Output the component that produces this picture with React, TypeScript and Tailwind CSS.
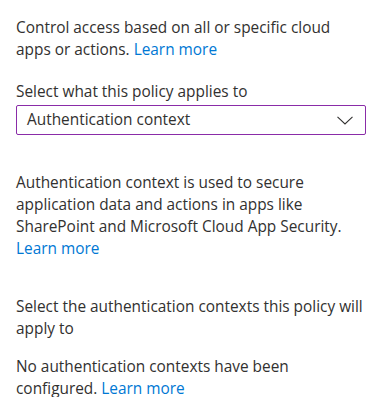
function Chevron() {
  return (
    <svg width="16" height="9" viewBox="0 0 16 9" fill="none" className="shrink-0">
      <path d="M0.5 0.8 L8 8 L15.5 0.8" stroke="#323130" strokeWidth="1.1" />
    </svg>
  );
}

function LearnMore() {
  return <a className="text-[#0078d4] cursor-pointer">Learn more</a>;
}

export default function App() {
  return (
    <div
      className="w-[388px] h-[397px] bg-white text-[#323130] text-[15.4px] leading-[22px] overflow-hidden"
      style={{ fontFamily: '"Segoe UI", "Open Sans", sans-serif' }}
    >
      <div className="flex flex-col w-[350px] ml-4 pt-[17px]">
        <p className="max-w-[330px]">
          Control access based on all or specific cloud apps or actions. <LearnMore />
        </p>

        {/* dropdown */}
        <div className="mt-5">
          <label className="block">Select what this policy applies to</label>
          <div className="mt-[2px] flex items-center justify-between h-[30px] border border-[#8a2ca8] rounded-[2px] pl-[10px] pr-[12px] cursor-pointer">
            <span>Authentication context</span>
            <Chevron />
          </div>
        </div>

        <p className="mt-[37px]">
          Authentication context is used to secure application data and actions in apps like SharePoint and
          Microsoft Cloud App Security.
          <br />
          <LearnMore />
        </p>

        <p className="mt-9">Select the authentication contexts this policy will apply to</p>

        <p className="mt-4">
          No authentication contexts have been configured. <LearnMore />
        </p>
      </div>
    </div>
  );
}
